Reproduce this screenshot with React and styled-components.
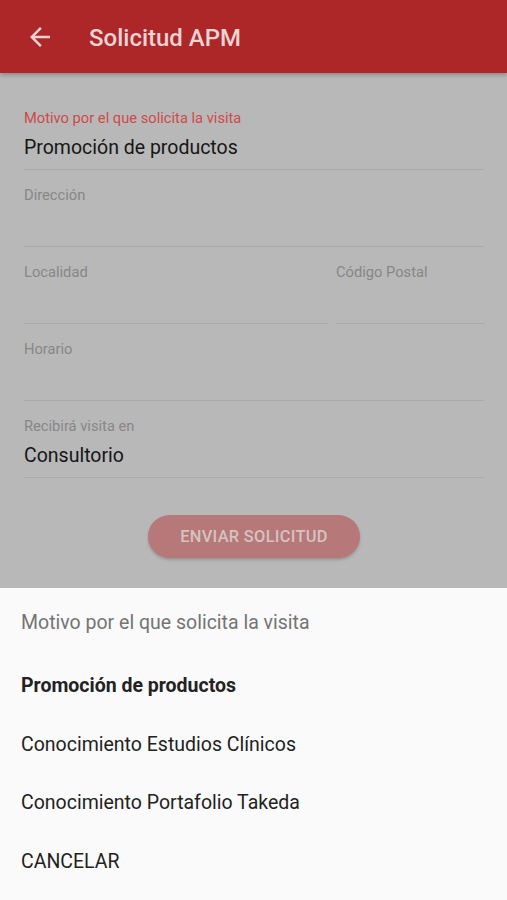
import React from "react";
import styled, { createGlobalStyle } from "styled-components";

const GlobalStyle = createGlobalStyle`
  html, body {
    margin: 0;
    padding: 0;
    background: #b8b8b8;
    font-family: Roboto, "Liberation Sans", sans-serif;
  }
`;

const Screen = styled.div`
  width: 507px;
  height: 900px;
  display: flex;
  flex-direction: column;
  background: #b8b8b8;
  overflow: hidden;
`;

const AppBar = styled.header`
  height: 73px;
  flex-shrink: 0;
  display: flex;
  align-items: center;
  background: #ad2729;
  box-shadow: 0 2px 4px rgba(0, 0, 0, 0.25);
  position: relative;
  z-index: 1;
`;

const BackButton = styled.button`
  width: 30px;
  height: 30px;
  margin-left: 25px;
  padding: 0;
  border: 0;
  background: none;
  display: flex;
  svg {
    width: 30px;
    height: 30px;
    fill: #e9d3d3;
  }
`;

const Title = styled.h1`
  margin: 2px 0 0 34px;
  font-size: 24px;
  font-weight: 500;
  color: #e9d3d3;
`;

const Form = styled.main`
  flex: 1;
  padding: 20px 23px 0 24px;
  display: flex;
  flex-direction: column;
`;

const Row = styled.div`
  display: flex;
  gap: 8px;
`;

const Field = styled.div`
  flex: ${(p) => (p.$width ? `0 0 ${p.$width}px` : p.$grow ? "1 1 0" : "none")};
  padding-top: 16px;
  border-bottom: 1px solid #a9a9a9;
`;

const Label = styled.div`
  height: 18px;
  line-height: 18px;
  font-size: 14.7px;
  white-space: nowrap;
  color: ${(p) => (p.$active ? "#cf4a4a" : "#878787")};
`;

const Value = styled.div`
  margin: 9px 0 9px;
  height: 24px;
  line-height: 24px;
  font-size: 19.5px;
  color: #161616;
`;

const Actions = styled.div`
  display: flex;
  justify-content: center;
  padding-top: 37px;
`;

const SubmitButton = styled.button`
  width: 212px;
  height: 43px;
  border: 0;
  border-radius: 22px;
  background: #b67878;
  color: #d5c3c3;
  font-family: inherit;
  font-size: 16.4px;
  font-weight: 500;
  letter-spacing: 0.3px;
  box-shadow: 0 2px 3px rgba(0, 0, 0, 0.18);
`;

const Sheet = styled.section`
  height: 312px;
  flex-shrink: 0;
  background: #fafafa;
  padding: 0 21px;
  display: flex;
  flex-direction: column;
`;

const SheetTitle = styled.div`
  height: 70px;
  line-height: 70px;
  font-size: 19.5px;
  color: #747474;
`;

const Option = styled.div`
  height: 58.7px;
  display: flex;
  align-items: center;
  font-size: 19.5px;
  color: #222;
  font-weight: ${(p) => (p.$selected ? 700 : 400)};
  &:nth-child(2) {
    margin-top: -2px;
  }
`;

const options = [
  "Promoción de productos",
  "Conocimiento Estudios Clínicos",
  "Conocimiento Portafolio Takeda",
  "CANCELAR",
];

export default function App() {
  return (
    <>
      <GlobalStyle />
      <Screen>
        <AppBar>
          <BackButton aria-label="Volver">
            <svg viewBox="0 0 24 24">
              <path d="M20 11H7.83l5.59-5.59L12 4l-8 8 8 8 1.41-1.41L7.83 13H20v-2z" />
            </svg>
          </BackButton>
          <Title>Solicitud APM</Title>
        </AppBar>

        <Form>
          <Field>
            <Label $active>Motivo por el que solicita la visita</Label>
            <Value>Promoción de productos</Value>
          </Field>
          <Field>
            <Label>Dirección</Label>
            <Value />
          </Field>
          <Row>
            <Field $grow>
              <Label>Localidad</Label>
              <Value />
            </Field>
            <Field $width={148}>
              <Label>Código Postal</Label>
              <Value />
            </Field>
          </Row>
          <Field>
            <Label>Horario</Label>
            <Value />
          </Field>
          <Field>
            <Label>Recibirá visita en</Label>
            <Value>Consultorio</Value>
          </Field>
          <Actions>
            <SubmitButton>ENVIAR SOLICITUD</SubmitButton>
          </Actions>
        </Form>

        <Sheet>
          <SheetTitle>Motivo por el que solicita la visita</SheetTitle>
          {options.map((o, i) => (
            <Option key={o} $selected={i === 0}>
              {o}
            </Option>
          ))}
        </Sheet>
      </Screen>
    </>
  );
}
